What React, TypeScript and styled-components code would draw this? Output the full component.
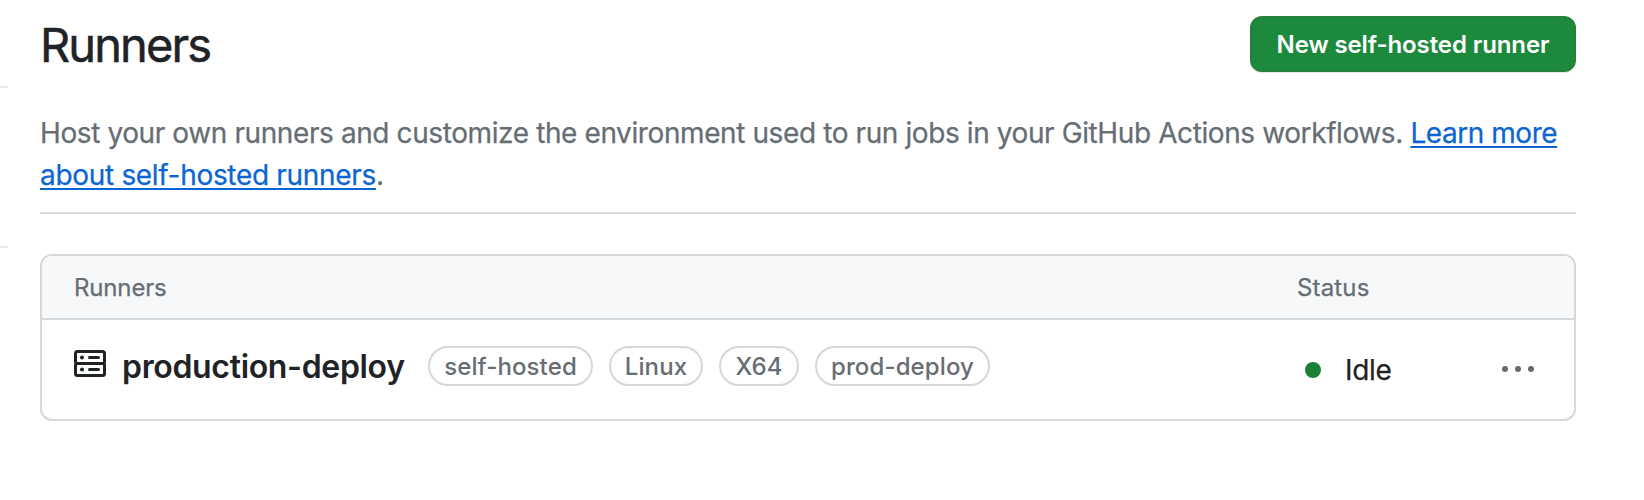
import React from 'react';
import styled, { createGlobalStyle } from 'styled-components';

const GlobalStyle = createGlobalStyle`
  * { box-sizing: border-box; }
  body {
    margin: 0;
    background: #fff;
    color: #1f2326;
    font-family: Inter, "Liberation Sans", sans-serif;
  }
`;

const Page = styled.div`
  display: flex;
  gap: 32px;
  width: 1644px;
  height: 500px;
  overflow: hidden;
`;

const SidebarEdge = styled.aside`
  width: 8px;
  padding-top: 86px;
`;

const SidebarGroup = styled.div`
  height: 160px;
  border-top: 2px solid #e6e8ea;
`;

const Content = styled.main`
  width: 1536px;
  padding-top: 16px;
`;

const Subhead = styled.header`
  display: flex;
  justify-content: space-between;
  align-items: flex-start;
  height: 96px;
`;

const Title = styled.h1`
  margin: -7px 0 0;
  font-size: 47px;
  line-height: 72px;
  font-weight: 400;
  letter-spacing: -1.9px;
  -webkit-text-stroke: 0.5px #1f2326;
`;

const PrimaryButton = styled.button`
  width: 326px;
  height: 56px;
  padding: 1px 0 0;
  border: 2px solid #25803b;
  border-radius: 12px;
  background: #1d893c;
  box-shadow: 0 1px 1px rgba(31, 35, 40, 0.12);
  color: #fff;
  font: 600 24px/51px Inter, "Liberation Sans", sans-serif;
  letter-spacing: -0.1px;
  white-space: nowrap;
`;

const Description = styled.p`
  margin: 0;
  height: 102px;
  border-bottom: 2px solid #d6dade;
  color: #666d73;
  font-size: 28px;
  line-height: 42px;
  letter-spacing: -0.4px;
  white-space: nowrap;
  -webkit-text-stroke: 0.25px currentColor;
`;

const Link = styled.a<{ $spacing: number }>`
  color: #0b66d4;
  letter-spacing: ${({ $spacing }) => $spacing}px;
  text-decoration: underline;
  text-decoration-thickness: 2px;
  text-underline-offset: 3px;
  text-decoration-skip-ink: none;
`;

const Box = styled.section`
  height: 167px;
  margin-top: 40px;
  border: 2px solid #d3d8da;
  border-radius: 12px;
  overflow: hidden;
`;

const BoxHeader = styled.div`
  display: flex;
  height: 64px;
  padding: 0 32px;
  border-bottom: 2px solid #d3d8da;
  background: #f6f8fa;
  color: #666d73;
  font-size: 24px;
  line-height: 64px;
  -webkit-text-stroke: 0.25px currentColor;
`;

const HeaderCell = styled.span<{ $width?: number; $spacing: number }>`
  width: ${({ $width }) => ($width ? `${$width}px` : 'auto')};
  letter-spacing: ${({ $spacing }) => $spacing}px;
`;

const Row = styled.div`
  display: flex;
  align-items: flex-start;
  height: 99px;
  padding-left: 32px;
`;

const ServerIcon = styled.svg`
  flex: none;
  width: 32px;
  height: 28px;
  margin: 30px 16px 0 0;
`;

const RunnerName = styled.strong`
  width: 306px;
  padding-top: 23px;
  font-size: 32px;
  line-height: 48px;
  font-weight: 600;
  letter-spacing: -0.33px;
  white-space: nowrap;
`;

const Labels = styled.div`
  display: flex;
  gap: 16px;
  width: 871px;
  padding-top: 26px;
`;

const Label = styled.span<{ $width: number }>`
  width: ${({ $width }) => $width}px;
  height: 40px;
  border: 2px solid #d3d8da;
  border-radius: 20px;
  color: #666d73;
  font-size: 24px;
  line-height: 38px;
  font-weight: 500;
  letter-spacing: 0.12px;
  text-align: center;
  white-space: nowrap;
`;

const Status = styled.div`
  display: flex;
  align-items: center;
  gap: 24px;
  width: 203px;
  height: 42px;
  margin-top: 29px;
  padding-left: 6px;
  font-size: 28px;
  line-height: 42px;
  letter-spacing: -0.3px;
  -webkit-text-stroke: 0.25px currentColor;
`;

const StatusDot = styled.i`
  width: 16px;
  height: 16px;
  border-radius: 50%;
  background: #1a7f37;
`;

const MenuIcon = styled.svg`
  flex: none;
  width: 32px;
  height: 6px;
  margin-top: 46px;
`;

const labels = [
  { text: 'self-hosted', width: 165 },
  { text: 'Linux', width: 94 },
  { text: 'X64', width: 80 },
  { text: 'prod-deploy', width: 175 },
];

export default function App() {
  return (
    <Page>
      <GlobalStyle />
      <SidebarEdge>
        <SidebarGroup />
        <SidebarGroup />
      </SidebarEdge>
      <Content>
        <Subhead>
          <Title>Runners</Title>
          <PrimaryButton>New self-hosted runner</PrimaryButton>
        </Subhead>
        <Description>
          Host your own runners and customize the environment used to run jobs in your GitHub Actions workflows.{' '}
          <Link $spacing={-0.45}>Learn more</Link>
          <br />
          <Link $spacing={-0.31}>about self-hosted runners</Link>.
        </Description>
        <Box>
          <BoxHeader>
            <HeaderCell $width={1223} $spacing={-0.15}>
              Runners
            </HeaderCell>
            <HeaderCell $spacing={0.15}>Status</HeaderCell>
          </BoxHeader>
          <Row>
            <ServerIcon viewBox="0 0 32 28" fill="none" stroke="#1f2326" strokeWidth="3" strokeLinecap="round">
              <rect x="1.5" y="1.5" width="29" height="12" rx="2" />
              <rect x="1.5" y="13.5" width="29" height="12" rx="2" />
              <path d="M15.5 7.5h9M15.5 19.5h9" />
              <g fill="#1f2326" stroke="none">
                <circle cx="8" cy="7.5" r="2" />
                <circle cx="8" cy="19.5" r="2" />
              </g>
            </ServerIcon>
            <RunnerName>production-deploy</RunnerName>
            <Labels>
              {labels.map(({ text, width }) => (
                <Label key={text} $width={width}>
                  {text}
                </Label>
              ))}
            </Labels>
            <Status>
              <StatusDot />
              Idle
            </Status>
            <MenuIcon viewBox="0 0 32 6" fill="#656a70">
              <circle cx="3" cy="3" r="3" />
              <circle cx="16" cy="3" r="3" />
              <circle cx="29" cy="3" r="3" />
            </MenuIcon>
          </Row>
        </Box>
      </Content>
    </Page>
  );
}
